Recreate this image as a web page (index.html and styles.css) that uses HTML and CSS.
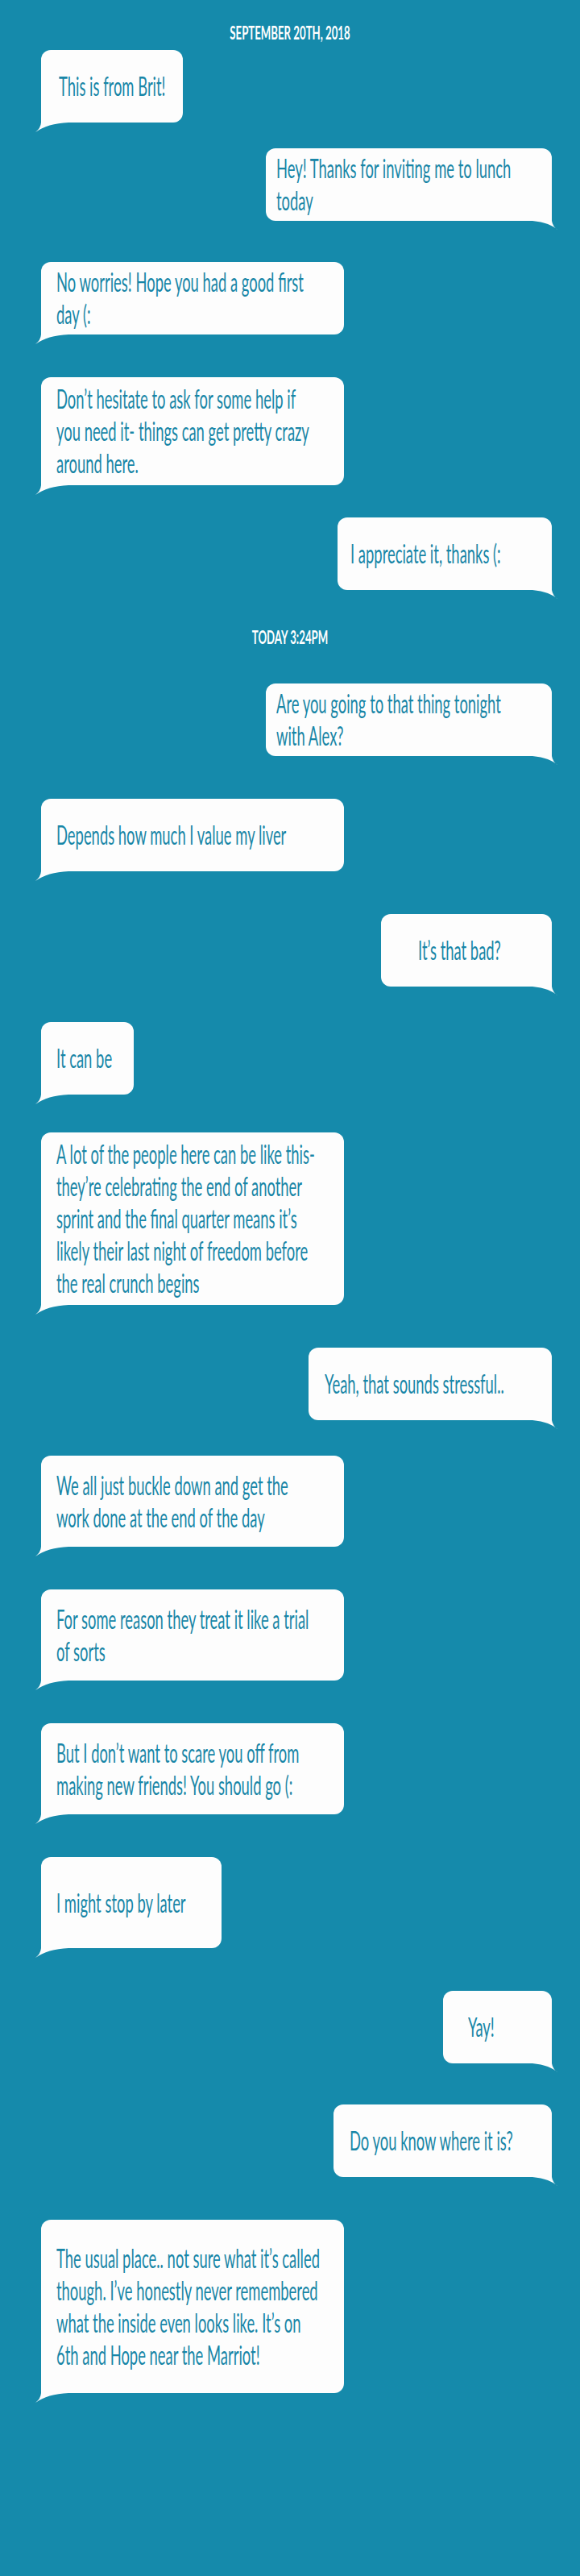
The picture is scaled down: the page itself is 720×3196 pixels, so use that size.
FILE: index.html
```html
<!DOCTYPE html>
<html lang="en">
<head>
<meta charset="utf-8">
<title>Chat with Brit</title>
<link rel="stylesheet" href="styles.css">
</head>
<body>
<main class="thread">
  <p class="stamp stamp--first">SEPTEMBER 20TH, 2018</p>

  <div class="msg msg--in mt-10"><div class="bubble w176 pl22"><p class="text">This is from Brit!</p></div></div>
  <div class="msg msg--out mt32"><div class="bubble w355 pl13"><p class="text">Hey! Thanks for inviting me to lunch<br>today</p></div></div>
  <div class="msg msg--in mt51"><div class="bubble w376"><p class="text">No worries! Hope you had a good first<br>day (:</p></div></div>
  <div class="msg msg--in"><div class="bubble w376 pv7"><p class="text">Don’t hesitate to ask for some help if<br>you need it- things can get pretty crazy<br>around here.</p></div></div>
  <div class="msg msg--out mt40"><div class="bubble w266 pl16"><p class="text">I appreciate it, thanks (:</p></div></div>

  <p class="stamp stamp--second">TODAY 3:24PM</p>

  <div class="msg msg--out mt-f"><div class="bubble w355 pl13"><p class="text">Are you going to that thing tonight<br>with Alex?</p></div></div>
  <div class="msg msg--in"><div class="bubble w376"><p class="text">Depends how much I value my liver</p></div></div>
  <div class="msg msg--out"><div class="bubble w212 pl46"><p class="text">It’s that bad?</p></div></div>
  <div class="msg msg--in mt44"><div class="bubble w115"><p class="text">It can be</p></div></div>
  <div class="msg msg--in mt47"><div class="bubble w376 pv7"><p class="text">A lot of the people here can be like this-<br>they’re celebrating the end of another<br>sprint and the final quarter means it’s<br>likely their last night of freedom before<br>the real crunch begins</p></div></div>
  <div class="msg msg--out"><div class="bubble w302 pl20"><p class="text">Yeah, that sounds stressful..</p></div></div>
  <div class="msg msg--in mt44"><div class="bubble w376 h113"><p class="text">We all just buckle down and get the<br>work done at the end of the day</p></div></div>
  <div class="msg msg--in"><div class="bubble w376 h113"><p class="text">For some reason they treat it like a trial<br>of sorts</p></div></div>
  <div class="msg msg--in"><div class="bubble w376 h113"><p class="text">But I don’t want to scare you off from<br>making new friends! You should go (:</p></div></div>
  <div class="msg msg--in"><div class="bubble w224 h113"><p class="text">I might stop by later</p></div></div>
  <div class="msg msg--out"><div class="bubble w135 pl31"><p class="text">Yay!</p></div></div>
  <div class="msg msg--out mt51"><div class="bubble w271 pl20"><p class="text">Do you know where it is?</p></div></div>
  <div class="msg msg--in"><div class="bubble w376 h215"><p class="text">The usual place.. not sure what it’s called<br>though. I’ve honestly never remembered<br>what the inside even looks like. It’s on<br>6th and Hope near the Marriot!</p></div></div>
</main>
</body>
</html>
```

FILE: styles.css
```css
html, body {
  margin: 0;
  padding: 0;
  background: #158aab;
}

.thread {
  box-sizing: border-box;
  min-height: 3196px;
  display: flex;
  flex-direction: column;
  font-family: Lato, "Open Sans", "Liberation Sans", sans-serif;
}

.stamp {
  margin: 0;
  height: 22px;
  font-size: 22px;
  line-height: 22px;
  font-weight: 700;
  color: #ffffff;
  text-align: center;
  white-space: nowrap;
  transform: scaleX(0.6);
  transform-origin: center center;
}

.stamp--first { margin-top: 30px; }
.stamp--second { margin-top: 48px; }

.msg {
  display: flex;
  margin-top: 53px;
  padding: 0 35px 0 51px;
}

.msg--in { justify-content: flex-start; }
.msg--out { justify-content: flex-end; }

.mt-10 { margin-top: 10px; }
.mt-f { margin-top: 46px; }
.mt32 { margin-top: 32px; }
.mt40 { margin-top: 40px; }
.mt44 { margin-top: 44px; }
.mt47 { margin-top: 47px; }
.mt51 { margin-top: 51px; }

.bubble {
  position: relative;
  box-sizing: border-box;
  display: flex;
  align-items: center;
  min-height: 90px;
  padding: 5px 0 5px 19px;
  background: #fdfdfd;
  border-radius: 12px;
}

.bubble::after {
  content: "";
  position: absolute;
  bottom: -12px;
  height: 24px;
  background: #fdfdfd;
}

.msg--in .bubble::after {
  left: -7px;
  width: 45px;
  clip-path: path("M7 0 L7 12 Q6.5 19 0 24 Q15 13 41 12 L41 0 Z");
}

.msg--out .bubble::after {
  right: -8px;
  width: 32px;
  clip-path: path("M24 0 L24 12 Q25 19 32 24 Q22 14 0 12 L0 0 Z");
}

.text {
  margin: 0;
  font-size: 32px;
  line-height: 40px;
  font-weight: 400;
  color: #1886a7;
  white-space: nowrap;
  transform: scaleX(0.575);
  transform-origin: left center;
}

/* bubble widths */
.w115 { width: 115px; }
.w135 { width: 135px; }
.w176 { width: 176px; }
.w212 { width: 212px; }
.w224 { width: 224px; }
.w266 { width: 266px; }
.w271 { width: 271px; }
.w302 { width: 302px; }
.w355 { width: 355px; }
.w376 { width: 376px; }

/* text insets */
.pl13 { padding-left: 13px; }
.pl16 { padding-left: 16px; }
.pl20 { padding-left: 20px; }
.pl22 { padding-left: 22px; }
.pl31 { padding-left: 31px; }
.pl46 { padding-left: 46px; }

/* heights */
.pv7 { padding-top: 7px; padding-bottom: 7px; }
.h113 { min-height: 113px; }
.h215 { min-height: 215px; }
```
